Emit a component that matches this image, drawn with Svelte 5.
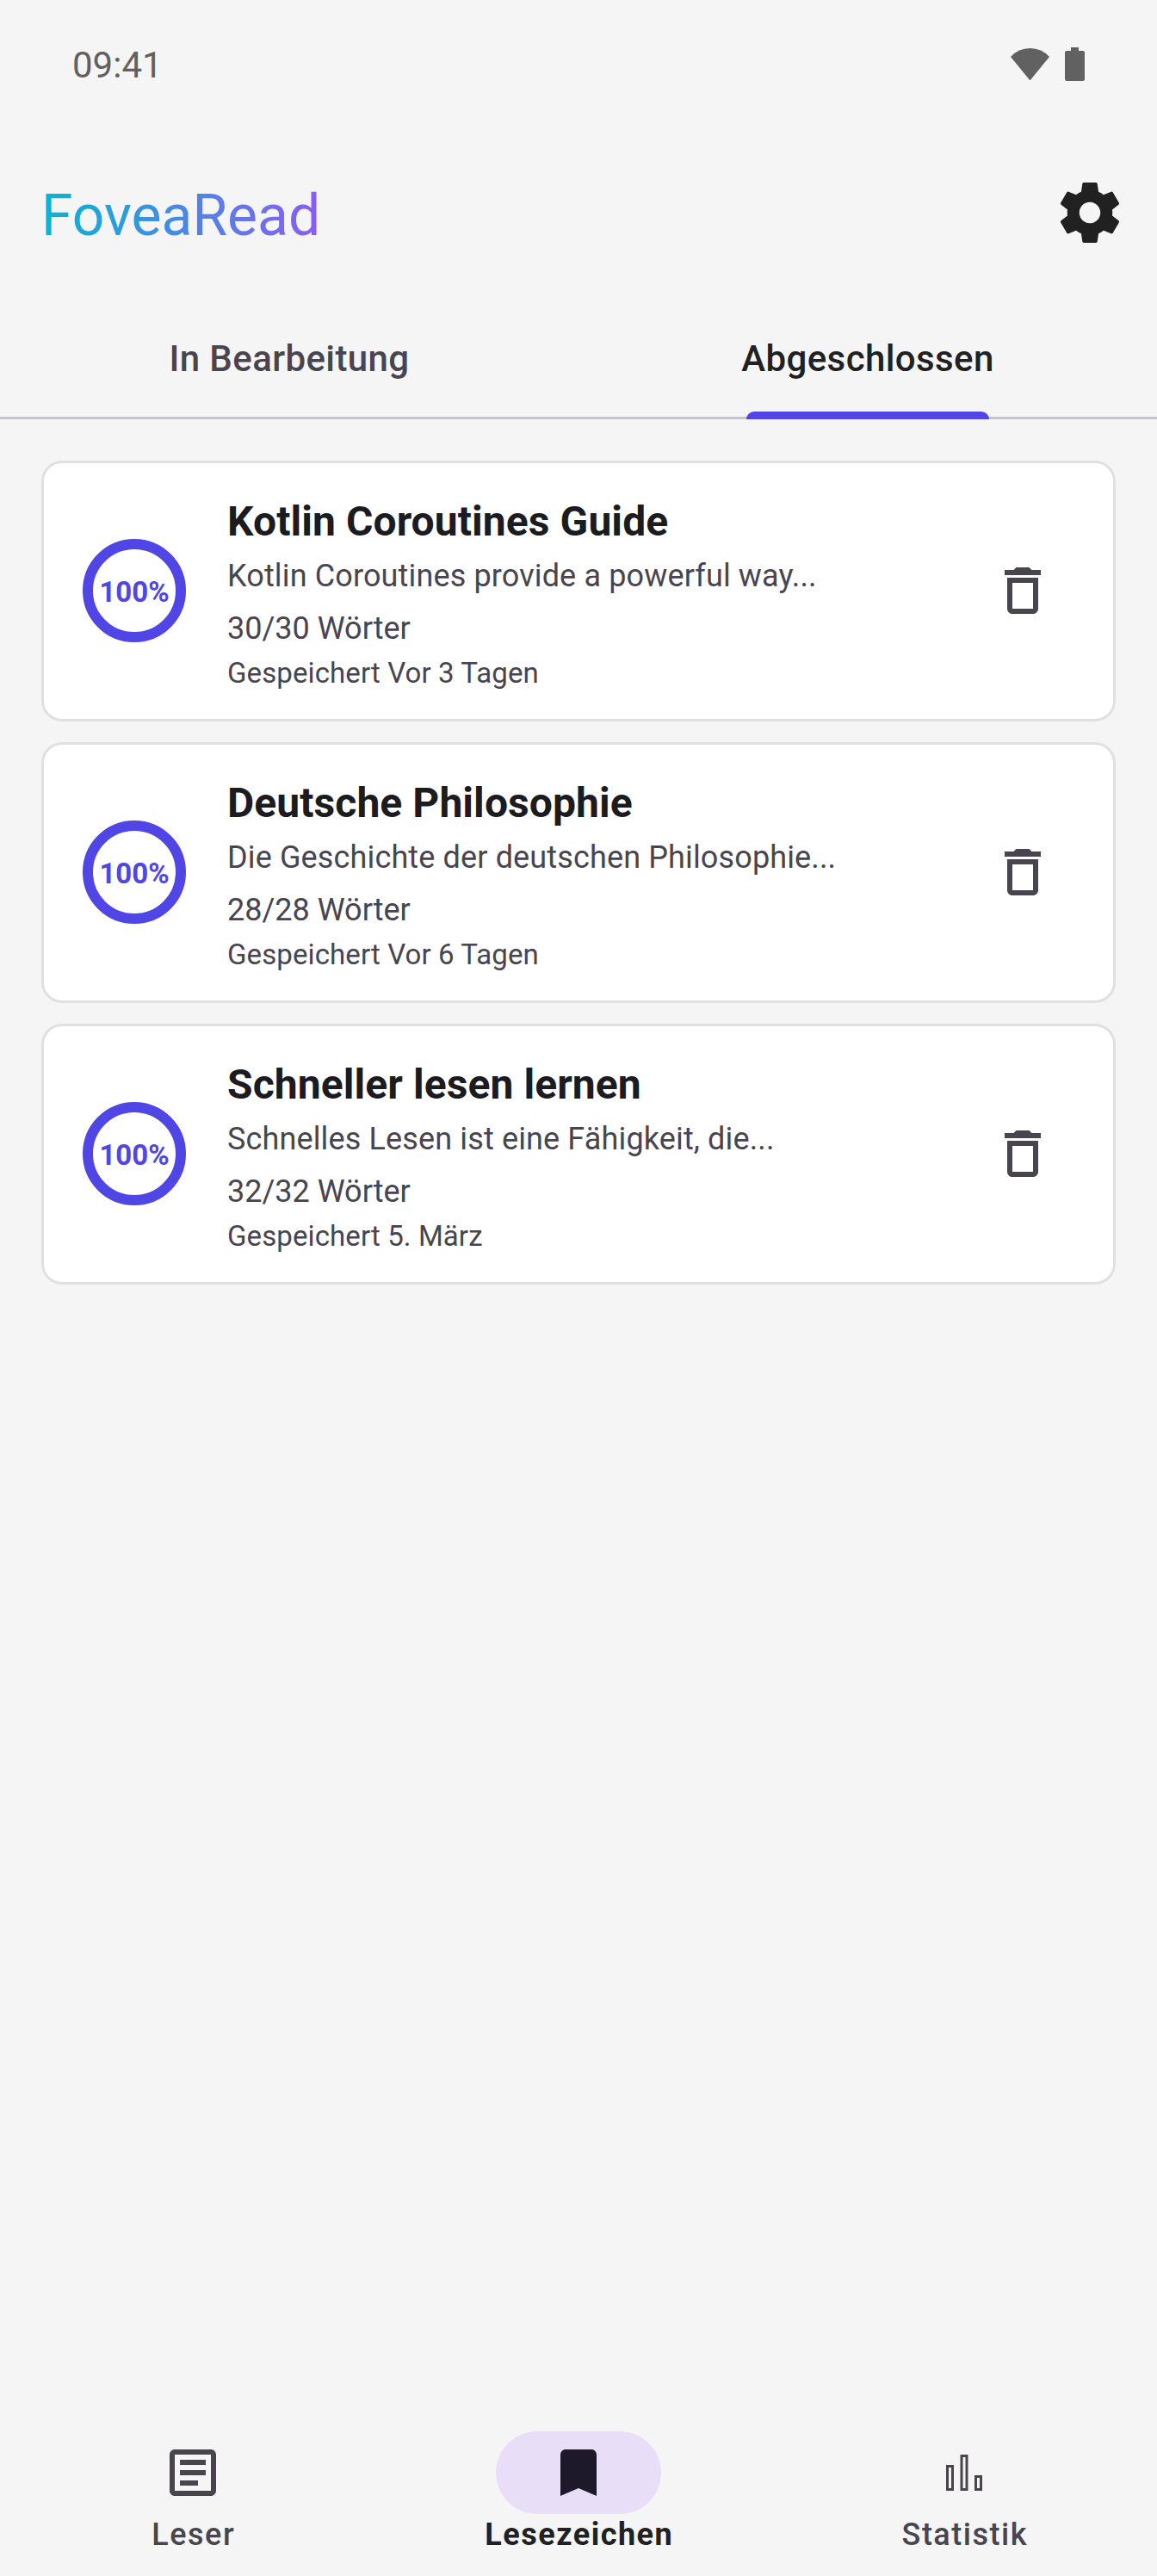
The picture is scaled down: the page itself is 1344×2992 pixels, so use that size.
<script>
  const TABS = ["In Bearbeitung", "Abgeschlossen"];

  const texts = [
    {
      title: "Kotlin Coroutines Guide",
      preview: "Kotlin Coroutines provide a powerful way...",
      read: 30,
      total: 30,
      saved: "Vor 3 Tagen",
    },
    {
      title: "Deutsche Philosophie",
      preview: "Die Geschichte der deutschen Philosophie...",
      read: 28,
      total: 28,
      saved: "Vor 6 Tagen",
    },
    {
      title: "Schneller lesen lernen",
      preview: "Schnelles Lesen ist eine Fähigkeit, die...",
      read: 32,
      total: 32,
      saved: "5. März",
    },
  ];

  const NAV = [
    {
      label: "Leser",
      icon: "M19 5v14H5V5h14m0-2H5c-1.1 0-2 .9-2 2v14c0 1.1.9 2 2 2h14c1.1 0 2-.9 2-2V5c0-1.1-.9-2-2-2zM14 17H7v-2h7v2zM17 13H7v-2h10v2zM17 9H7V7h10v2z",
    },
    {
      label: "Lesezeichen",
      icon: "M17 3H7c-1.1 0-2 .9-2 2v16l7-3 7 3V5c0-1.1-.9-2-2-2z",
    },
    {
      label: "Statistik",
      icon: "M5 9h3v10H5zM6 10v8h1v-8zM10.5 5h3v14h-3zM11.5 6v12h1V6zM16 13h3v6h-3zM17 14v4h1v-4z",
    },
  ];

  // circumference of the r=54 progress ring
  const RING = 2 * Math.PI * 54;

  let activeTab = $state(1);
  let activeNav = $state(1);
  let items = $state(texts);

  const remove = (item) => {
    items = items.filter((it) => it.title !== item.title);
  };
</script>

<div class="screen">
  <div class="status-bar">
    <span class="clock">09:41</span>
    <div class="status-icons">
      <svg class="wifi" viewBox="0 0 45 37">
        <path d="M0 10Q9 0 22.5 0T45 10L22.5 37.5z" />
      </svg>
      <svg class="battery" viewBox="0 0 23 39">
        <path
          d="M7 0h9v4h5a2 2 0 0 1 2 2v31a2 2 0 0 1-2 2H2a2 2 0 0 1-2-2V6a2 2 0 0 1 2-2h5z"
        />
      </svg>
    </div>
  </div>

  <header class="app-bar">
    <h1 class="brand">FoveaRead</h1>
    <button class="icon-btn" aria-label="Einstellungen">
      <svg class="gear" viewBox="0 0 24 24">
        <path
          d="M19.43 12.98c.04-.32.07-.64.07-.98s-.03-.66-.07-.98l2.11-1.65c.19-.15.24-.42.12-.64l-2-3.46c-.12-.22-.39-.3-.61-.22l-2.49 1c-.52-.4-1.08-.73-1.69-.98l-.38-2.65C14.46 2.18 14.25 2 14 2h-4c-.25 0-.46.18-.49.42l-.38 2.65c-.61.25-1.17.59-1.69.98l-2.49-1c-.23-.09-.49 0-.61.22l-2 3.46c-.13.22-.07.49.12.64l2.11 1.65c-.04.32-.07.65-.07.98s.03.66.07.98l-2.11 1.65c-.19.15-.24.42-.12.64l2 3.46c.12.22.39.3.61.22l2.49-1c.52.4 1.08.73 1.69.98l.38 2.65c.03.24.24.42.49.42h4c.25 0 .46-.18.49-.42l.38-2.65c.61-.25 1.17-.59 1.69-.98l2.49 1c.23.09.49 0 .61-.22l2-3.46c.12-.22.07-.49-.12-.64l-2.11-1.65zM12 15.5c-1.93 0-3.5-1.57-3.5-3.5s1.57-3.5 3.5-3.5 3.5 1.57 3.5 3.5-1.57 3.5-3.5 3.5z"
        />
      </svg>
    </button>
  </header>

  <div class="tabs">
    {#each TABS as tab, i (tab)}
      <button
        class="tab"
        class:active={i === activeTab}
        onclick={() => (activeTab = i)}>{tab}</button
      >
    {/each}
  </div>

  <main class="list">
    {#each items as item (item.title)}
      {@const progress = item.read / item.total}
      <article class="card">
        <div class="ring">
          <svg viewBox="0 0 120 120">
            <circle
              cx="60"
              cy="60"
              r="54"
              stroke-dasharray={RING}
              stroke-dashoffset={RING * (1 - progress)}
            />
          </svg>
          <span class="percent">{Math.round(progress * 100)}%</span>
        </div>
        <div class="info">
          <h2 class="title">{item.title}</h2>
          <p class="preview">{item.preview}</p>
          <p class="words">{item.read}/{item.total} Wörter</p>
          <p class="saved">Gespeichert {item.saved}</p>
        </div>
        <button
          class="icon-btn"
          aria-label="Löschen"
          onclick={() => remove(item)}
        >
          <svg class="icon" viewBox="0 0 24 24">
            <path
              d="M6 19c0 1.1.9 2 2 2h8c1.1 0 2-.9 2-2V7H6v12zM8 9h8v10H8V9zm7.5-5l-1-1h-5l-1 1H5v2h14V4h-3.5z"
            />
          </svg>
        </button>
      </article>
    {/each}
  </main>

  <nav class="bottom-nav">
    {#each NAV as entry, i (entry.label)}
      <button
        class="nav-item"
        class:active={i === activeNav}
        onclick={() => (activeNav = i)}
      >
        <span class="pill">
          <svg class="icon" viewBox="0 0 24 24">
            <path fill-rule="evenodd" d={entry.icon} />
          </svg>
        </span>
        <span class="nav-label">{entry.label}</span>
      </button>
    {/each}
  </nav>
</div>

<style>
  :global(body) {
    background: #f5f5f5;
  }

  .screen {
    display: flex;
    flex-direction: column;
    width: 1344px;
    height: 2992px;
    background: #f5f5f5;
    font-family: Roboto, sans-serif;
    color: #49454f;
    overflow: hidden;
  }

  button {
    margin: 0;
    padding: 0;
    border: none;
    background: none;
    font: inherit;
    color: inherit;
    cursor: pointer;
  }

  h1,
  h2,
  p {
    margin: 0;
  }

  svg {
    display: block;
    fill: currentColor;
  }

  .icon {
    width: 72px;
    height: 72px;
  }

  .icon-btn {
    display: flex;
    align-items: center;
    justify-content: center;
    width: 144px;
    height: 144px;
  }

  /* ── Status bar ── */
  .status-bar {
    display: flex;
    align-items: center;
    justify-content: space-between;
    height: 151px;
    box-sizing: border-box;
    padding: 0 84px;
    color: #616161;
  }

  .clock {
    font-size: 42px;
    line-height: 48px;
  }

  .status-icons {
    display: flex;
    align-items: center;
    gap: 18px;
    padding-bottom: 2px;
  }

  .wifi {
    width: 45px;
    height: 37px;
  }

  .battery {
    width: 23px;
    height: 39px;
  }

  /* ── App bar ── */
  .app-bar {
    display: flex;
    align-items: center;
    justify-content: space-between;
    height: 192px;
    box-sizing: border-box;
    padding: 0 6px 0 48px;
  }

  .brand {
    padding-top: 7px;
    font-size: 66px;
    font-weight: 400;
    line-height: 84px;
    background: linear-gradient(90deg, #06b6d4, #8b5cf6);
    -webkit-background-clip: text;
    background-clip: text;
    color: transparent;
  }

  .gear {
    width: 84px;
    height: 84px;
    color: #212121;
  }

  /* ── Tabs ── */
  .tabs {
    display: flex;
    height: 144px;
    box-sizing: border-box;
    border-bottom: 3px solid #cac4d0;
  }

  .tab {
    position: relative;
    flex: 1;
    padding-top: 6px;
    font-size: 42px;
    font-weight: 500;
    line-height: 61px;
    letter-spacing: 0.4px;
  }

  .tab.active {
    color: #212121;
  }

  .tab.active::after {
    content: "";
    position: absolute;
    left: calc(50% - 141px);
    bottom: -3px;
    width: 282px;
    height: 9px;
    border-radius: 9px 9px 0 0;
    background: #4f46e5;
  }

  /* ── Cards ── */
  .list {
    display: flex;
    flex: 1;
    flex-direction: column;
    gap: 24px;
    padding: 48px;
  }

  .card {
    display: flex;
    align-items: center;
    height: 303px;
    box-sizing: border-box;
    padding: 0 33px 1px 45px;
    border: 3px solid #e0e0e0;
    border-radius: 24px;
    background: #fff;
  }

  .ring {
    display: grid;
    place-items: center;
    width: 120px;
    height: 120px;
    color: #4f46e5;
  }

  .ring > * {
    grid-area: 1 / 1;
  }

  .ring svg {
    width: 120px;
    height: 120px;
    transform: rotate(-90deg);
  }

  .ring circle {
    fill: none;
    stroke: currentColor;
    stroke-width: 12;
  }

  .percent {
    padding-top: 4px;
    font-size: 33px;
    font-weight: 700;
    line-height: 48px;
  }

  .info {
    flex: 1;
    align-self: flex-start;
    margin-left: 48px;
    padding-top: 32px;
  }

  .title {
    font-size: 48px;
    font-weight: 700;
    line-height: 72px;
    letter-spacing: 0.08px;
    color: #1c1b1f;
  }

  .preview,
  .words {
    font-size: 36px;
    line-height: 48px;
  }

  .preview {
    margin-top: 3px;
    letter-spacing: 0.14px;
  }

  .words {
    margin-top: 13px;
  }

  .saved {
    margin-top: 4px;
    font-size: 33px;
    line-height: 48px;
    letter-spacing: 0.1px;
  }

  /* ── Bottom navigation ── */
  .bottom-nav {
    display: flex;
    height: 168px;
  }

  .nav-item {
    display: flex;
    flex: 1;
    flex-direction: column;
    align-items: center;
  }

  .pill {
    display: flex;
    align-items: center;
    justify-content: center;
    width: 192px;
    height: 96px;
    border-radius: 48px;
  }

  .nav-label {
    padding-left: 1.5px;
    font-size: 36px;
    font-weight: 500;
    line-height: 48px;
    letter-spacing: 1.5px;
  }

  .active .pill {
    background: #e8def8;
    color: #1d192b;
  }

  .active .nav-label {
    font-weight: 700;
    color: #212121;
  }
</style>
